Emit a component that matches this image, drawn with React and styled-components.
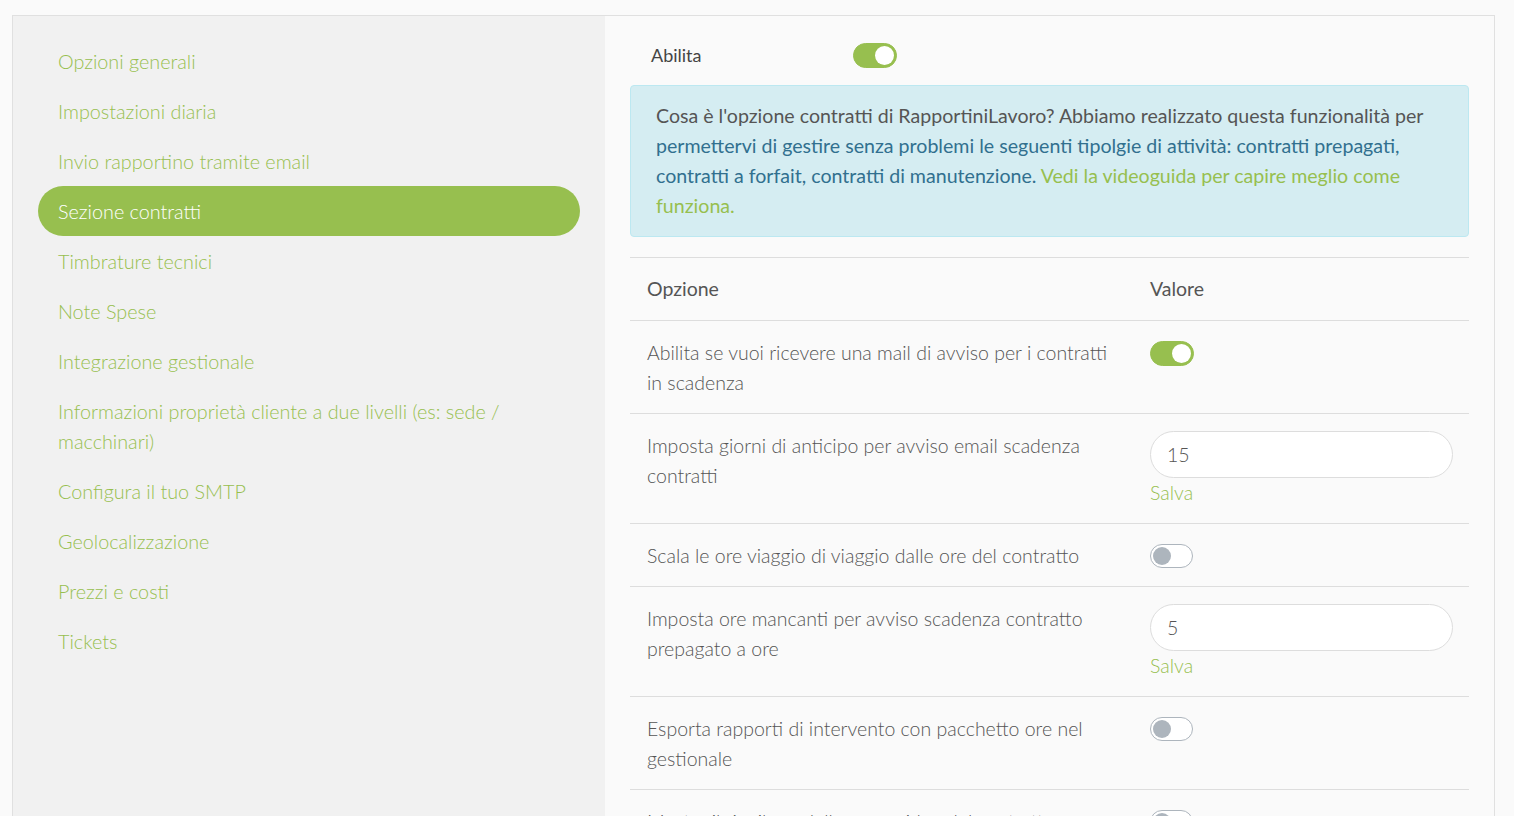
import React from 'react';
import styled, { createGlobalStyle } from 'styled-components';

const GlobalStyle = createGlobalStyle`
  html, body {
    margin: 0;
    padding: 0;
    background: #fafafa;
    overflow: hidden;
    font-family: Lato, "Open Sans", sans-serif;
  }
`;

const green = '#97bf4f';

const Frame = styled.div`
  margin: 15px 19px 0 12px;
  border: 1px solid #e0e0e0;
  border-bottom: none;
  display: grid;
  grid-template-columns: 592px 1fr;
  min-height: 820px;
`;

const Sidebar = styled.nav`
  background: #f1f1f1;
  padding: 20px 25px 0 25px;
`;

const NavItem = styled.a`
  display: block;
  padding: 10px 20px;
  border-radius: 25px;
  font-size: 19.8px;
  font-weight: 300;
  line-height: 30px;
  color: ${p => (p.$active ? '#fff' : green)};
  background: ${p => (p.$active ? green : 'transparent')};
  text-decoration: none;
  cursor: pointer;
`;

const Main = styled.section`
  background: #fafafa;
  padding: 24px 25px 0 25px;
`;

const EnableRow = styled.div`
  display: flex;
  align-items: center;
  height: 30px;
  padding-left: 21px;
  margin-bottom: 15px;
`;

const EnableLabel = styled.span`
  width: 202px;
  font-size: 18px;
  color: #444;
`;

const Toggle = styled.span`
  position: relative;
  display: inline-block;
  box-sizing: border-box;
  width: ${p => (p.$on ? '44px' : '43px')};
  height: ${p => (p.$on ? '25px' : '24px')};
  border-radius: 13px;
  background: ${p => (p.$on ? green : '#fff')};
  border: 1px solid ${p => (p.$on ? green : '#adb5bd')};
  &::after {
    content: '';
    position: absolute;
    top: 2px;
    left: ${p => (p.$on ? '21px' : '2px')};
    width: ${p => (p.$on ? '19px' : '18px')};
    height: ${p => (p.$on ? '19px' : '18px')};
    border-radius: 50%;
    background: ${p => (p.$on ? '#fff' : '#adb5bd')};
  }
`;

const InfoBox = styled.div`
  background: #d5edf2;
  border: 1px solid #bce8f1;
  border-radius: 4px;
  padding: 15px 25px;
  margin-bottom: 20px;
  font-size: 19.6px;
  line-height: 30px;
  color: #31708f;
`;

const Question = styled.span`
  color: #555;
`;

const Link = styled.a`
  color: ${green};
  text-decoration: none;
`;

const Table = styled.table`
  width: 100%;
  border-collapse: collapse;
  table-layout: fixed;
  font-size: 19.5px;
  line-height: 30px;
  color: #555;
`;

const Th = styled.th`
  text-align: left;
  font-weight: 400;
  padding: 16px 17px;
  border-top: 1px solid #ddd;
  border-bottom: 1px solid #ddd;
  width: ${p => p.$w || 'auto'};
`;

const Td = styled.td`
  vertical-align: top;
  font-weight: 300;
  padding: 17px 16px 15px 17px;
  border-bottom: 1px solid #ddd;
`;

const ToggleCell = styled.div`
  height: 30px;
  display: flex;
  align-items: center;
`;

const Input = styled.input`
  box-sizing: border-box;
  display: block;
  width: 100%;
  height: 47px;
  border: 1px solid #ddd;
  border-radius: 24px;
  background: #fff;
  padding: 0 16px;
  font-family: Lato, sans-serif;
  font-size: 19.5px;
  font-weight: 300;
  color: #555;
  outline: none;
`;

const Save = styled.a`
  display: block;
  color: ${green};
  font-weight: 300;
  line-height: 30px;
`;

const menu = [
  'Opzioni generali',
  'Impostazioni diaria',
  'Invio rapportino tramite email',
  'Sezione contratti',
  'Timbrature tecnici',
  'Note Spese',
  'Integrazione gestionale',
  'Informazioni proprietà cliente a due livelli (es: sede / macchinari)',
  'Configura il tuo SMTP',
  'Geolocalizzazione',
  'Prezzi e costi',
  'Tickets',
];

const options = [
  { label: 'Abilita se vuoi ricevere una mail di avviso per i contratti in scadenza', toggle: true },
  { label: 'Imposta giorni di anticipo per avviso email scadenza contratti', input: '15' },
  { label: 'Scala le ore viaggio di viaggio dalle ore del contratto', toggle: false },
  { label: 'Imposta ore mancanti per avviso scadenza contratto prepagato a ore', input: '5' },
  { label: 'Esporta rapporti di intervento con pacchetto ore nel gestionale', toggle: false },
  { label: 'Mostra il riepilogo delle ore residue del contratto', toggle: false },
];

export default function App() {
  return (
    <>
      <GlobalStyle />
      <Frame>
        <Sidebar>
          {menu.map(m => (
            <NavItem key={m} $active={m === 'Sezione contratti'}>{m}</NavItem>
          ))}
        </Sidebar>
        <Main>
          <EnableRow>
            <EnableLabel>Abilita</EnableLabel>
            <Toggle $on />
          </EnableRow>
          <InfoBox>
            <Question>Cosa è l'opzione contratti di RapportiniLavoro? Abbiamo realizzato questa funzionalità per </Question>
            permettervi di gestire senza problemi le seguenti tipolgie di attività: contratti prepagati,
            contratti a forfait, contratti di manutenzione.{' '}
            <Link>Vedi la videoguida per capire meglio come funziona.</Link>
          </InfoBox>
          <Table>
            <thead>
              <tr>
                <Th $w="469px">Opzione</Th>
                <Th>Valore</Th>
              </tr>
            </thead>
            <tbody>
              {options.map(o => (
                <tr key={o.label}>
                  <Td>{o.label}</Td>
                  <Td>
                    {o.input !== undefined ? (
                      <>
                        <Input defaultValue={o.input} />
                        <Save>Salva</Save>
                      </>
                    ) : (
                      <ToggleCell><Toggle $on={o.toggle} /></ToggleCell>
                    )}
                  </Td>
                </tr>
              ))}
            </tbody>
          </Table>
        </Main>
      </Frame>
    </>
  );
}
